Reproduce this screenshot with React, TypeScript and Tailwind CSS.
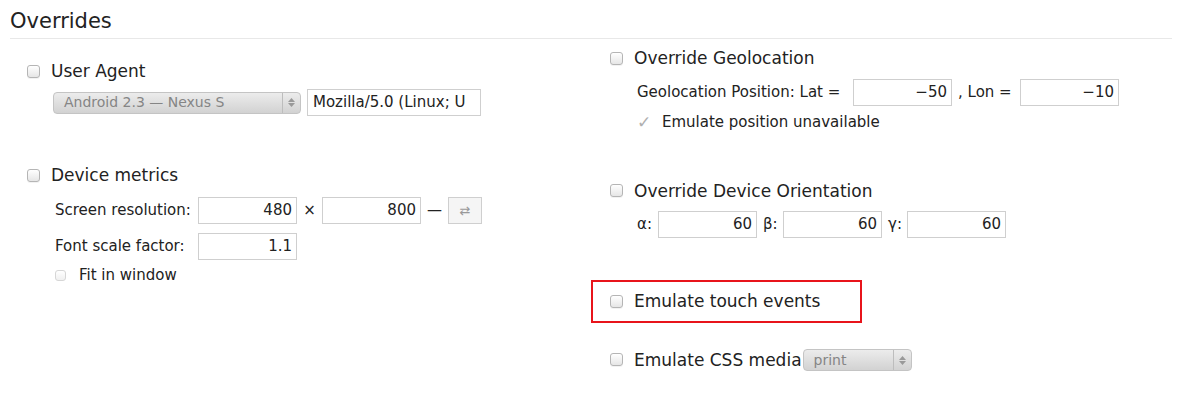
const font = { fontFamily: '"DejaVu Sans", "Liberation Sans", sans-serif' };

const Check = () => (
  <span className="inline-block w-[13px] h-[13px] rounded-[3px] border border-[#b5b5b5] bg-gradient-to-b from-white to-[#e6e6e6] shadow-[0_1px_0_rgba(0,0,0,0.05)] shrink-0" />
);

const Field = ({ value, w = 'w-[99px]' }: { value: string; w?: string }) => (
  <span className={`inline-flex items-center justify-end ${w} h-[27px] border border-[#cfcfcf] bg-white px-[4px] text-[15px] text-[#222]`}>
    {value}
  </span>
);

const MacSelect = ({ label, w }: { label: string; w: string }) => (
  <span className={`inline-flex items-center ${w} h-[22px] rounded-[4px] border border-[#c4c4c4] bg-gradient-to-b from-[#ececec] to-[#d2d2d2] text-[#858585] text-[14px]`}>
    <span className="flex-1 pl-[10px] truncate">{label}</span>
    <span className="w-[18px] h-full border-l border-[#bdbdbd] flex flex-col items-center justify-center gap-[1px]">
      <svg width="7" height="4" viewBox="0 0 7 4"><path d="M0 4 L3.5 0 L7 4 Z" fill="#999" /></svg>
      <svg width="7" height="4" viewBox="0 0 7 4"><path d="M0 0 L3.5 4 L7 0 Z" fill="#999" /></svg>
    </span>
  </span>
);

const Heading = ({ text }: { text: string }) => (
  <div className="flex items-center gap-[11px] text-[17px] text-[#222] leading-[24px]">
    <Check />
    <span>{text}</span>
  </div>
);

export default function App() {
  return (
    <div className="w-[1182px] h-[418px] bg-white text-[#222]" style={font}>
      <div className="px-[10px] pt-[6px]">
        <div className="text-[21px] leading-[30px] pb-[2px] border-b border-[#e8e8e8]">Overrides</div>
        <div className="grid grid-cols-2">
          {/* left column */}
          <div className="pl-[17px]">
            <div className="mt-[20px]">
              <Heading text="User Agent" />
              <div className="flex items-center gap-[6px] mt-[6px] ml-[26px]">
                <MacSelect label="Android 2.3 — Nexus S" w="w-[248px]" />
                <span className="inline-flex items-center w-[174px] h-[27px] border border-[#cfcfcf] bg-white px-[5px] text-[15px] overflow-hidden whitespace-nowrap">
                  Mozilla/5.0 (Linux; U
                </span>
              </div>
            </div>
            <div className="mt-[47px]">
              <Heading text="Device metrics" />
              <div className="ml-[28px] mt-[10px] text-[15px] flex flex-col gap-[9px]">
                <div className="flex items-center">
                  <span className="w-[143px]">Screen resolution:</span>
                  <Field value="480" />
                  <span className="w-[25px] text-center">×</span>
                  <Field value="800" />
                  <span className="w-[27px] text-center">—</span>
                  <span className="inline-flex items-center justify-center w-[34px] h-[27px] border border-[#cfcfcf] bg-[#f5f5f5] text-[#999] text-[13px]">⇄</span>
                </div>
                <div className="flex items-center">
                  <span className="w-[143px]">Font scale factor:</span>
                  <Field value="1.1" />
                </div>
              </div>
              <div className="flex items-center gap-[13px] ml-[28px] mt-[4px] text-[15px]">
                <span className="inline-block w-[11px] h-[11px] rounded-[3px] border border-[#d6d6d6] bg-gradient-to-b from-white to-[#f0f0f0]" />
                <span>Fit in window</span>
              </div>
            </div>
          </div>
          {/* right column */}
          <div>
            <div className="mt-[7px] pl-[19px]">
              <Heading text="Override Geolocation" />
              <div className="ml-[27px] mt-[9px] text-[15px] flex items-center">
                <span className="w-[216px]">Geolocation Position: Lat =</span>
                <Field value="−50" />
                <span className="w-[68px] pl-[6px]">, Lon =</span>
                <Field value="−10" />
              </div>
              <div className="ml-[27px] mt-[5px] flex items-center gap-[8px] text-[15px]">
                <span className="text-[#b0b0b0] text-[17px] leading-[20px] w-[17px]">✓</span>
                <span>Emulate position unavailable</span>
              </div>
            </div>
            <div className="mt-[45px] pl-[19px]">
              <Heading text="Override Device Orientation" />
              <div className="ml-[27px] mt-[8px] text-[15px] flex items-center">
                <span className="w-[21px]">α:</span>
                <Field value="60" />
                <span className="w-[26px] pl-[6px]">β:</span>
                <Field value="60" />
                <span className="w-[25px] pl-[6px]">γ:</span>
                <Field value="60" />
              </div>
            </div>
            <div className="mt-[42px] w-[271px] h-[43px] border-2 border-[#e8141b] pl-[17px] flex items-center">
              <Heading text="Emulate touch events" />
            </div>
            <div className="mt-[25px] pl-[19px] flex items-center">
              <Heading text="Emulate CSS media" />
              <span className="ml-[1px]"><MacSelect label="print" w="w-[109px]" /></span>
            </div>
          </div>
        </div>
      </div>
    </div>
  );
}
